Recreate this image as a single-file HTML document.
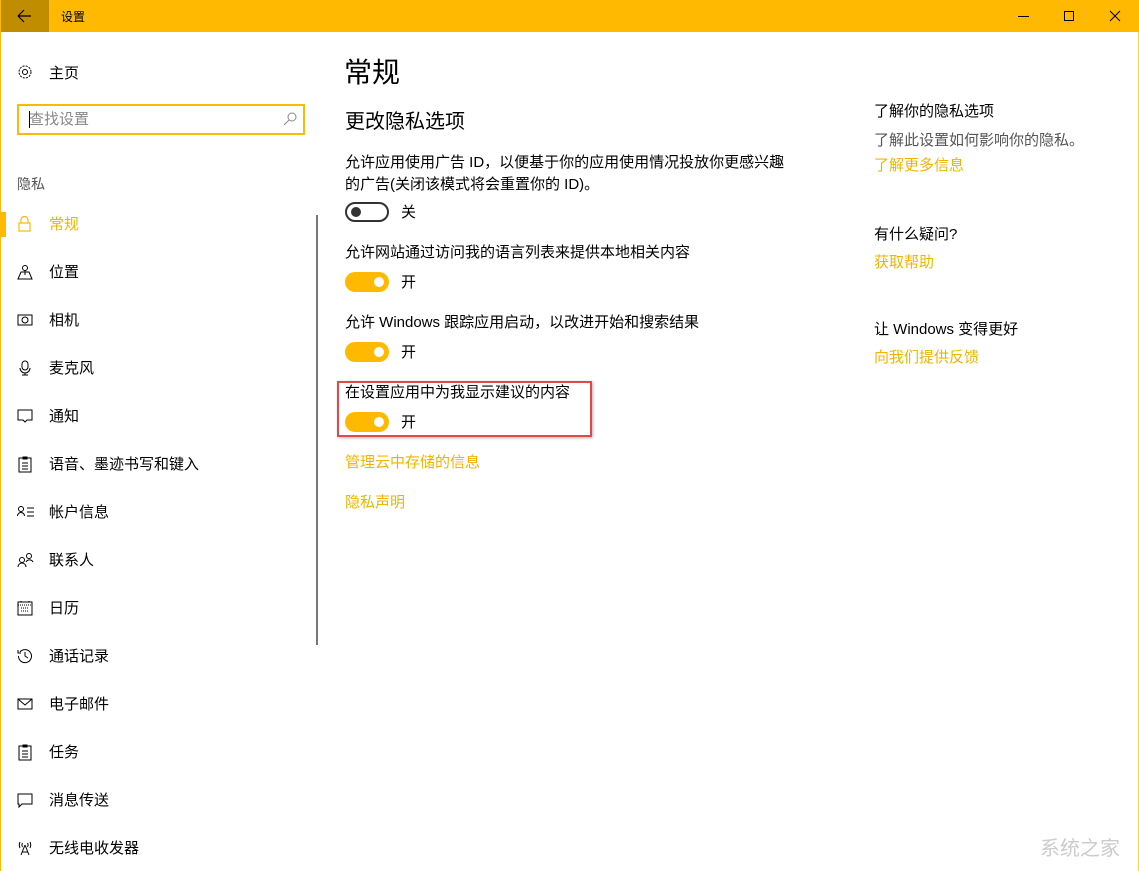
<!DOCTYPE html>
<html><head><meta charset="utf-8"><style>
*{margin:0;padding:0;box-sizing:border-box}
body{width:1139px;height:871px;background:#fff;position:relative;overflow:hidden;font-family:"Liberation Sans","Microsoft YaHei","Noto Sans CJK SC",sans-serif;font-size:15px;color:#000}
.a{position:absolute;white-space:nowrap;line-height:20px;transform:translateY(1px)}
.y{color:#f0b400}
.g{color:#555}
.tb{position:absolute;left:0;top:0;width:1139px;height:32px;background:#ffb900}
.back{position:absolute;left:0;top:0;width:49px;height:32px;background:#c08c00}
.tg{position:absolute;left:0;top:0;width:1px;height:871px;background:#ffb900}
.tgr{position:absolute;right:0;top:32px;width:1px;height:839px;background:#ffd24d}
.tog{position:absolute;width:44px;height:20px;border-radius:10px}
.on{background:#ffb900}
.on::after{content:"";position:absolute;right:5px;top:5px;width:10px;height:10px;border-radius:5px;background:#fff}
.off{border:2px solid #333;background:#fff}
.off::after{content:"";position:absolute;left:4px;top:3px;width:10px;height:10px;border-radius:5px;background:#333}
.ic{position:absolute;left:17px}
</style></head><body>
<div class="tb"></div><div class="back"></div>
<svg style="position:absolute;left:16px;top:8px" width="16" height="16"><path d="M2 8H15M2 8L8 2M2 8L8 14" stroke="#000" stroke-width="1.2" fill="none"/></svg>
<div class="a" style="left:61px;top:6px;font-size:12px">设置</div>
<svg style="position:absolute;left:1015px;top:8px" width="110" height="16" fill="none" stroke="#000" stroke-width="1"><path d="M3 8.5H14"/><rect x="49.5" y="3.5" width="9" height="9"/><path d="M95 3L105 13M105 3L95 13"/></svg>
<div class="tg"></div><div class="tgr"></div>

<svg class="ic" style="top:64px" width="16" height="16" fill="none" stroke="#000" stroke-width="1"><circle cx="8" cy="8" r="2.5"/><circle cx="8" cy="8" r="6" stroke-dasharray="2 1.2"/></svg>
<div class="a" style="left:49px;top:63px">主页</div>
<div style="position:absolute;left:17px;top:104px;width:288px;height:31px;border:2px solid #ffb900"></div>
<div style="position:absolute;left:29px;top:111px;width:1px;height:17px;background:#000"></div>
<div class="a" style="left:29px;top:109px;color:#888">查找设置</div>
<svg style="position:absolute;left:282px;top:111px" width="16" height="16" fill="none" stroke="#888"><circle cx="10" cy="6" r="4"/><path d="M7 9L2 14"/></svg>
<div class="a g" style="left:17px;top:173px;font-size:14px">隐私</div>
<div style="position:absolute;left:1px;top:212px;width:5px;height:25px;background:#ffb900"></div>
<svg class="ic" style="top:215px" width="16" height="18" fill="none" stroke="#ffb900" stroke-width="1.2"><rect x="2" y="8" width="11" height="8"/><path d="M4 8V5a3.5 3.5 0 0 1 7 0v3"/></svg>
<div class="a y" style="left:49px;top:214px">常规</div>
<div style="position:absolute;left:316px;top:215px;width:2px;height:430px;background:#777"></div>

<svg class="ic" style="top:264px" width="16" height="16" fill="none" stroke="#000"><circle cx="8" cy="4" r="2.5"/><path d="M8 6.5V11M1 15L4 8H12L15 15Z"/></svg>
<div class="a" style="left:49px;top:262px">位置</div>
<svg class="ic" style="top:312px" width="16" height="16" fill="none" stroke="#000"><rect x="1" y="3" width="14" height="10"/><circle cx="8" cy="8" r="3"/></svg>
<div class="a" style="left:49px;top:310px">相机</div>
<svg class="ic" style="top:360px" width="16" height="16" fill="none" stroke="#000"><rect x="5" y="1" width="6" height="9" rx="3"/><path d="M3 8a5 5 0 0 0 10 0M8 13V15M5 15H11"/></svg>
<div class="a" style="left:49px;top:358px">麦克风</div>
<svg class="ic" style="top:408px" width="16" height="16" fill="none" stroke="#000"><path d="M1 2H15V12H10L8 14L6 12H1Z"/></svg>
<div class="a" style="left:49px;top:406px">通知</div>
<svg class="ic" style="top:456px" width="16" height="17" fill="none" stroke="#000"><rect x="2" y="2" width="12" height="14"/><path d="M6 1H10V3H6ZM5 7H11M5 10H11M5 13H11"/></svg>
<div class="a" style="left:49px;top:454px">语音、墨迹书写和键入</div>
<svg class="ic" style="top:504px" width="18" height="16" fill="none" stroke="#000"><circle cx="4" cy="5" r="2.5"/><path d="M0.5 12a3.5 3.5 0 0 1 7 0M10 4H17M10 8H17M10 12H17"/></svg>
<div class="a" style="left:49px;top:502px">帐户信息</div>
<svg class="ic" style="top:552px" width="18" height="16" fill="none" stroke="#000"><circle cx="5" cy="8" r="2.5"/><path d="M1 15a4 4 0 0 1 8 0"/><circle cx="12" cy="4" r="2.5"/><path d="M9 10a4 4 0 0 1 7 0"/></svg>
<div class="a" style="left:49px;top:550px">联系人</div>
<svg class="ic" style="top:600px" width="16" height="16" fill="none" stroke="#000"><rect x="1" y="2" width="14" height="13"/><path d="M1 5H15M4 1V3M12 1V3M4 8H12M4 11H12" stroke-dasharray="1 1"/></svg>
<div class="a" style="left:49px;top:598px">日历</div>
<svg class="ic" style="top:648px" width="16" height="16" fill="none" stroke="#000"><path d="M3 4A6.5 6.5 0 1 1 1.5 8M1 2V5H4M8 4V8L11 10"/></svg>
<div class="a" style="left:49px;top:646px">通话记录</div>
<svg class="ic" style="top:696px" width="16" height="16" fill="none" stroke="#000"><rect x="1" y="3" width="14" height="10"/><path d="M1 3L8 9L15 3"/></svg>
<div class="a" style="left:49px;top:694px">电子邮件</div>
<svg class="ic" style="top:744px" width="16" height="17" fill="none" stroke="#000"><rect x="2" y="2" width="12" height="14"/><path d="M6 1H10V3H6ZM5 7H11M5 10H11M5 13H11"/></svg>
<div class="a" style="left:49px;top:742px">任务</div>
<svg class="ic" style="top:792px" width="16" height="16" fill="none" stroke="#000"><path d="M1 2H15V12H5L2 15V12H1Z"/></svg>
<div class="a" style="left:49px;top:790px">消息传送</div>
<svg class="ic" style="top:840px" width="16" height="16" fill="none" stroke="#000"><path d="M8 5L4 15M8 5L12 15M5 12H11M3 2a7 7 0 0 0 0 6M13 2a7 7 0 0 1 0 6M5.5 3a4 4 0 0 0 0 4M10.5 3a4 4 0 0 1 0 4"/></svg>
<div class="a" style="left:49px;top:838px">无线电收发器</div>

<div class="a" style="left:344px;top:55px;font-size:28px;line-height:34px">常规</div>
<div class="a" style="left:345px;top:108px;font-size:20px;line-height:26px">更改隐私选项</div>
<div class="a" style="left:345px;top:152px">允许应用使用广告 ID，以便基于你的应用使用情况投放你更感兴趣</div>
<div class="a" style="left:345px;top:174px">的广告(关闭该模式将会重置你的 ID)。</div>
<div class="tog off" style="left:345px;top:202px"></div>
<div class="a" style="left:401px;top:202px">关</div>
<div class="a" style="left:345px;top:242px">允许网站通过访问我的语言列表来提供本地相关内容</div>
<div class="tog on" style="left:345px;top:272px"></div>
<div class="a" style="left:401px;top:272px">开</div>
<div class="a" style="left:345px;top:312px">允许 Windows 跟踪应用启动，以改进开始和搜索结果</div>
<div class="tog on" style="left:345px;top:342px"></div>
<div class="a" style="left:401px;top:342px">开</div>
<div style="position:absolute;left:337px;top:381px;width:255px;height:56px;border:2px solid #e2474a;box-shadow:1px 1px 3px rgba(0,0,0,.3)"></div>
<div class="a" style="left:345px;top:382px">在设置应用中为我显示建议的内容</div>
<div class="tog on" style="left:345px;top:412px"></div>
<div class="a" style="left:401px;top:412px">开</div>
<div class="a y" style="left:345px;top:452px">管理云中存储的信息</div>
<div class="a y" style="left:345px;top:492px">隐私声明</div>

<div class="a" style="left:874px;top:101px">了解你的隐私选项</div>
<div class="a g" style="left:874px;top:130px">了解此设置如何影响你的隐私。</div>
<div class="a y" style="left:874px;top:155px">了解更多信息</div>
<div class="a" style="left:874px;top:224px">有什么疑问?</div>
<div class="a y" style="left:874px;top:252px">获取帮助</div>
<div class="a" style="left:874px;top:319px">让 Windows 变得更好</div>
<div class="a y" style="left:874px;top:347px">向我们提供反馈</div>
<div class="a" style="left:1040px;top:838px;font-size:20px;color:#ccc">系统之家</div>
</body></html>
